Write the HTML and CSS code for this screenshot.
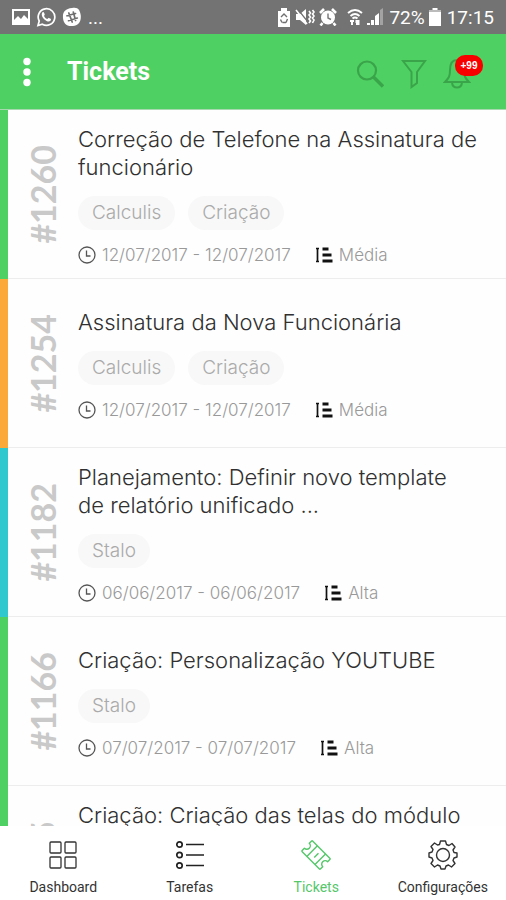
FILE: index.html
```html
<!DOCTYPE html>
<html lang="pt-BR">
<head>
<meta charset="utf-8">
<meta name="viewport" content="width=device-width, initial-scale=1">
<title>Tickets</title>
<link rel="stylesheet" href="styles.css">
</head>
<body>
<svg class="sprite" aria-hidden="true">
  <symbol id="clock" viewBox="0 0 18 18"><g fill="none" stroke="currentColor" stroke-width="1.3"><circle cx="9" cy="9" r="8"/><path d="M8.500 4.500V10H12.500"/></g></symbol>
  <symbol id="priority" viewBox="0 0 18 16"><path d="M2.500 1V15M1 1.500H4M1 14.500H4" fill="none" stroke="currentColor" stroke-width="1.700"/><path d="M7.500 2H13.500M7.500 8H16.500M7.500 14H17.500" fill="none" stroke="currentColor" stroke-width="3"/></symbol>
</svg>

<div class="status">
  <div class="status-group">
    <svg width="18" height="18" viewBox="0 0 18 18"><path fill="#fff" fill-rule="evenodd" d="M0 1H18V17H0ZM2 3V12L6 8L9 11L12 7L16 11V3Z"/></svg>
    <svg width="20" height="20" viewBox="0 0 20 20"><path d="M2 18.500L3.200 14A8.300 8.300 0 1 1 6.300 17.200Z" fill="none" stroke="#fff" stroke-width="1.700"/><path d="M6.500 5.300C8 4.500 8.300 6.500 8.800 7.600C8.500 8.600 7.800 8.700 8.300 9.400C9.200 10.900 10.200 11.500 11.400 12C12.100 11.600 12.500 10.700 13 10.900L15 12C14.900 14.600 12.800 14.800 11 14.200C8.200 13.200 4 8.500 6.500 5.300Z" fill="#fff"/></svg>
    <svg width="20" height="20" viewBox="0 0 20 20"><path d="M10 1C16 -.5 18 3 18.700 8C19.500 15 16 18.500 11 19C4 19.700 1.500 16 1 11C.5 5 3 1.800 10 1Z" fill="#fff"/><path d="M6.800 6L10.200 15M11.300 5L13.600 13.500M5 8.800L13.500 6.500M6.500 13.700L15.300 11" stroke="#6f6f6f" stroke-width="1.700" stroke-linecap="round"/></svg>
    <span>...</span>
  </div>
  <div class="status-group status-right">
    <svg width="14" height="19" viewBox="0 0 14 19"><path d="M4 0H10V3H13V19H1V3H4Z" fill="#fff"/><path d="M4 9L7 6L10 9M3.500 11.500L5 14.500M10.500 11L9 14.500M5.500 14.500H9" fill="none" stroke="#707070" stroke-width="1.400"/></svg>
    <svg width="20" height="18" viewBox="0 0 20 18"><path d="M1 6H5L11 1V17L5 12H1Z" fill="#fff"/><path d="M2.500 1L13 14" stroke="#707070" stroke-width="1.200"/><path d="M1 2L12 16M14 3L15.500 5L14 7L15.500 9L14 11L15.500 13L14 15M17.500 2L19 4L17.500 6L19 8L17.500 10L19 12L17.500 15" fill="none" stroke="#fff" stroke-width="1.600"/></svg>
    <svg width="18" height="18" viewBox="0 0 18 18"><circle cx="9" cy="9.500" r="7" fill="#fff"/><path d="M1 5L5 1M13 1L17 5M3.500 15L1.500 17.500M14.500 15L16.500 17.500" stroke="#fff" stroke-width="2.600"/><path d="M9 5.500V10L12 11.500" fill="none" stroke="#777" stroke-width="1.400"/></svg>
    <svg class="wifi" width="16" height="18" viewBox="0 0 16 18"><path d="M1 5Q8 -1 15 5M3.500 8Q8 4 12.500 8M5.500 10.500Q8 8.500 10.500 10.500" fill="none" stroke="#fff" stroke-width="1.900"/><path d="M3 12H7V14H6V17H4V14H3ZM9 17V15H8.500V12H12.500V17Z" fill="#fff"/></svg>
    <svg width="18" height="18" viewBox="0 0 18 18"><path d="M0 17V15H3V17ZM4 17V12H7V17ZM8 17V8L12 5V17Z" fill="#fff"/><path d="M13 17V2L16 0V17Z" fill="#a3a3a3"/></svg>
    <span>72%</span>
    <svg width="12" height="18" viewBox="0 0 12 18"><path d="M3.500 0H8.500V2H12V18H0V2H3.500Z" fill="#fff"/><path d="M0 2H12V4H0Z" fill="#bbb"/></svg>
    <span class="time">17:15</span>
  </div>
</div>

<header class="bar">
  <button class="menu" type="button" aria-label="Menu"><svg width="8" height="30" viewBox="0 0 8 30"><g fill="#fff"><circle cx="4" cy="4.500" r="3.700"/><circle cx="4" cy="15" r="3.700"/><circle cx="4" cy="25.500" r="3.700"/></g></svg></button>
  <h1>Tickets</h1>
  <div class="actions">
    <button type="button" aria-label="Buscar"><svg width="30" height="30" viewBox="0 0 30 30"><circle cx="12" cy="11.500" r="9" fill="none" stroke="currentColor" stroke-width="2.200"/><path d="M18.500 18L28 27.500" stroke="currentColor" stroke-width="3.400"/></svg></button>
    <button type="button" aria-label="Filtrar"><svg width="26" height="30" viewBox="0 0 26 30"><path d="M2 2H24L16 13V24L10.500 28V13Z" fill="none" stroke="currentColor" stroke-width="2"/></svg></button>
    <button class="bell" type="button" aria-label="Notificações"><svg width="28" height="32" viewBox="0 0 28 32"><path d="M14 2C8 2 7 8 7 12C7 18 6 20 2 24H26C22 20 21 18 21 12C21 8 20 2 14 2ZM9 25C10 31 18 31 19 25" fill="none" stroke="currentColor" stroke-width="2"/></svg><span class="badge">+99</span></button>
  </div>
</header>

<main class="list">
  <article class="ticket green">
    <div class="code"><span>#1260</span></div>
    <div class="info">
      <h2>Correção de Telefone na Assinatura de funcionário</h2>
      <div class="chips"><span>Calculis</span><span>Criação</span></div>
      <div class="meta"><svg width="18" height="18"><use href="#clock"/></svg><span>12/07/2017 - 12/07/2017</span><svg class="prio" width="18" height="16"><use href="#priority"/></svg><span>Média</span></div>
    </div>
  </article>
  <article class="ticket orange">
    <div class="code"><span>#1254</span></div>
    <div class="info">
      <h2>Assinatura da Nova Funcionária</h2>
      <div class="chips"><span>Calculis</span><span>Criação</span></div>
      <div class="meta"><svg width="18" height="18"><use href="#clock"/></svg><span>12/07/2017 - 12/07/2017</span><svg class="prio" width="18" height="16"><use href="#priority"/></svg><span>Média</span></div>
    </div>
  </article>
  <article class="ticket teal">
    <div class="code"><span>#1182</span></div>
    <div class="info">
      <h2>Planejamento: Definir novo template de&nbsp;relatório unificado ...</h2>
      <div class="chips"><span>Stalo</span></div>
      <div class="meta"><svg width="18" height="18"><use href="#clock"/></svg><span>06/06/2017 - 06/06/2017</span><svg class="prio" width="18" height="16"><use href="#priority"/></svg><span>Alta</span></div>
    </div>
  </article>
  <article class="ticket green">
    <div class="code"><span>#1166</span></div>
    <div class="info">
      <h2>Criação: Personalização YOUTUBE</h2>
      <div class="chips"><span>Stalo</span></div>
      <div class="meta"><svg width="18" height="18"><use href="#clock"/></svg><span>07/07/2017 - 07/07/2017</span><svg class="prio" width="18" height="16"><use href="#priority"/></svg><span>Alta</span></div>
    </div>
  </article>
  <article class="ticket green last">
    <div class="code"><span>#1165</span></div>
    <div class="info">
      <h2>Criação: Criação das telas do módulo</h2>
    </div>
  </article>
</main>

<nav class="tabs">
  <a href="#dashboard"><svg width="30" height="30" viewBox="0 0 30 30"><g fill="none" stroke="currentColor" stroke-width="1.300"><rect x="2" y="2" width="11" height="11" rx="1"/><rect x="17" y="2" width="11" height="11" rx="1"/><rect x="2" y="17" width="11" height="11" rx="1"/><rect x="17" y="17" width="11" height="11" rx="1"/></g></svg><span>Dashboard</span></a>
  <a href="#tarefas"><svg width="30" height="30" viewBox="0 0 30 30"><g fill="none" stroke="#222" stroke-width="1.700"><circle cx="4.500" cy="4.500" r="2.700"/><circle cx="4.500" cy="15" r="2.700"/><circle cx="4.500" cy="25.500" r="2.700"/><path d="M11 4.500H29M11 15H29M11 25.500H29"/></g></svg><span>Tarefas</span></a>
  <a class="current" href="#tickets" aria-current="page"><svg width="30" height="30" viewBox="0 0 30 30"><g transform="rotate(45 15 15)" fill="none" stroke="currentColor" stroke-width="1.400" stroke-linejoin="round"><path d="M3 7.500H27Q28 7.500 28 8.500V11.500A3.500 3.500 0 0 0 28 18.500V21.500Q28 22.500 27 22.500H3Q2 22.500 2 21.500V18.500A3.500 3.500 0 0 0 2 11.500V8.500Q2 7.500 3 7.500Z"/><path d="M9.500 7.500V22.500M21 7.500V22.500M15.500 12V18"/></g></svg><span>Tickets</span></a>
  <a href="#configuracoes"><svg width="30" height="30" viewBox="0 0 30 30"><g fill="none" stroke="currentColor" stroke-width="1.400" stroke-linejoin="round"><path d="M12.500 1H17.500L18.500 4.500L21 5.500L24 3.500L27 7L25 10L26 12.500L29 13V17L26 18L25 20.500L27 23.500L23.500 27L20.500 25L18 26L17 29H13L12 26L9.500 25L6.500 27L3 23.500L5 20.500L4 18L1 17V13L4 12L5 9.500L3 6.500L6.500 3L9.500 5L11.500 4.500Z"/><circle cx="15" cy="15" r="6.500"/></g></svg><span>Configurações</span></a>
</nav>
</body>
</html>
```
FILE: styles.css
```css
* { box-sizing: border-box; }

body {
  margin: 0;
  height: 100vh;
  display: flex;
  flex-direction: column;
  background: #fefefe;
  font-family: Roboto, "Liberation Sans", sans-serif;
  overflow: hidden;
}

svg { display: block; flex: none; }
.sprite { position: absolute; width: 0; height: 0; }

.status {
  flex: none;
  height: 34px;
  padding: 0 12px;
  display: flex;
  align-items: center;
  justify-content: space-between;
  background: #737373;
  color: #fff;
  font-size: 19px;
}
.status-group { display: flex; align-items: center; gap: 6px; }
.status-right { gap: 4px; }
.wifi { margin-left: 6px; }
.time { margin-left: 2px; }

.bar {
  flex: none;
  height: 76px;
  padding: 0 20px;
  display: flex;
  align-items: center;
  background: #4fd062;
  border-bottom: 1px solid #a8d8b0;
}
.bar button {
  display: block;
  padding: 0;
  border: 0;
  background: none;
  color: #3aa44a;
}
.bar .menu { width: 14px; padding: 0 3px; }
.bar h1 {
  margin: 0 auto 0 33px;
  color: #fff;
  font-size: 25px;
  font-weight: 700;
}
.actions { display: flex; align-items: center; gap: 16px; padding: 4px 15px 0 0; }
.bar .bell { position: relative; }
.badge {
  position: absolute;
  top: -3px;
  left: 12px;
  width: 28px;
  height: 21px;
  border-radius: 10px;
  background: #f90000;
  color: #fff;
  font-size: 10px;
  font-weight: 700;
  line-height: 21px;
  text-align: center;
}

.list { flex: 1; min-height: 0; overflow: hidden; }
.ticket {
  min-height: 169px;
  padding-right: 20px;
  display: flex;
  align-items: center;
  border-left: 8px solid;
  background: linear-gradient(#ededed, #ededed) bottom / 100% 1px no-repeat;
}
.green { border-color: #4fd062; }
.orange { border-color: #fba939; }
.teal { border-color: #2fc8cf; }
.code {
  flex: none;
  width: 70px;
  display: flex;
  justify-content: center;
  color: #c9c9c9;
  font-family: Lato, sans-serif;
  font-size: 34px;
  font-weight: 700;
  line-height: 40px;
}
.code span { writing-mode: vertical-rl; transform: rotate(180deg); }
.info {
  flex: 1;
  font-family: Inter, sans-serif;
  font-weight: 300;
}
.info h2 {
  margin: 0;
  color: #303030;
  font-size: 22px;
  font-weight: 300;
  line-height: 28px;
}
.last .info { align-self: flex-start; padding-top: 15px; }
.chips { display: flex; gap: 13px; margin: 15px 0; }
.chips span {
  padding: 0 14px;
  border-radius: 17px;
  background: #f8f8f8;
  color: #aaa;
  font-size: 19px;
  line-height: 34px;
}
.meta {
  display: flex;
  align-items: center;
  color: #999;
  font-size: 17px;
  line-height: 20px;
}
.meta svg { margin-right: 6px; color: #555; }
.meta .prio { margin-left: 24px; color: #111; }

.tabs {
  flex: none;
  height: 74px;
  padding-top: 14px;
  display: grid;
  grid-template-columns: repeat(4, 1fr);
  background: #fff;
}
.tabs a {
  display: flex;
  flex-direction: column;
  align-items: center;
  gap: 8px;
  color: #333;
  font-size: 14px;
  line-height: 18px;
  text-decoration: none;
}
.tabs .current { color: #55c76a; }
```
